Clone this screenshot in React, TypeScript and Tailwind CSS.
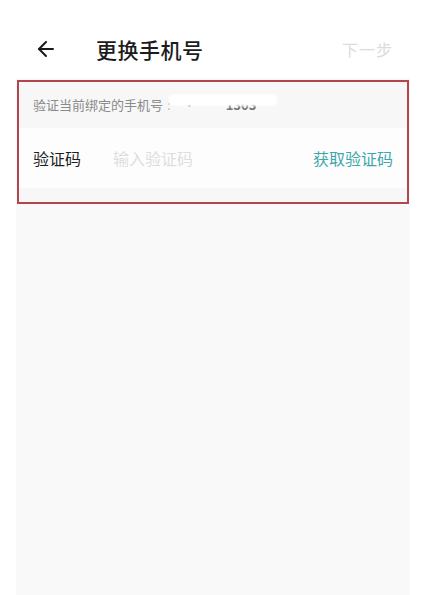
import { ArrowLeft } from "lucide-react";

const font = { fontFamily: '"Noto Sans CJK SC", "Noto Sans", sans-serif' };

export default function App() {
	return (
		<div className="w-[427px] h-[595px] bg-white flex flex-col overflow-hidden" style={font}>
			{/* ── Header ─────────────────────────────────────── */}
			<header className="h-[78px] shrink-0 flex items-center pt-[20px] pl-[34px] pr-[34px]">
				<ArrowLeft className="w-[24px] h-[24px] text-[#1a1a1a]" strokeWidth={2} />
				<h1 className="ml-[38px] text-[21px] leading-none font-medium text-[#1c1c1c] tracking-[0.5px]">更换手机号</h1>
				<span className="ml-auto text-[16px] leading-none text-[#dcdcdc] tracking-[1px]">下一步</span>
			</header>

			{/* ── Body ──────────────────────────────────────── */}
			<main className="flex-1 ml-[16px] mr-[17px] bg-[#f9f9f9] pt-[2px]">
				<section className="mx-[1px] border-2 border-[#b4454c] bg-[#f7f7f7]">
					<div className="h-[46px] flex items-center pl-[14px] text-[13px] text-[#8a8a8a] relative">
						<span>验证当前绑定的手机号</span>
						<span className="ml-[4px] text-[#bbb]">:</span>
						<span className="ml-[12px] text-[#999]">·</span>
						<span className="ml-[30px] text-[#777] font-semibold">1303</span>
						<span className="absolute left-[150px] top-[12px] w-[108px] h-[12px] bg-white blur-[1px] rounded-sm" />
					</div>
					<div className="h-[60px] bg-[#fdfdfd] flex items-center pl-[14px] pr-[14px] text-[16px]">
						<span className="text-[#1f1f1f]">验证码</span>
						<span className="ml-[32px] text-[#dedede]">输入验证码</span>
						<span className="ml-auto text-[#3ea7ad]">获取验证码</span>
					</div>
					<div className="h-[14px]" />
				</section>
			</main>
		</div>
	);
}
